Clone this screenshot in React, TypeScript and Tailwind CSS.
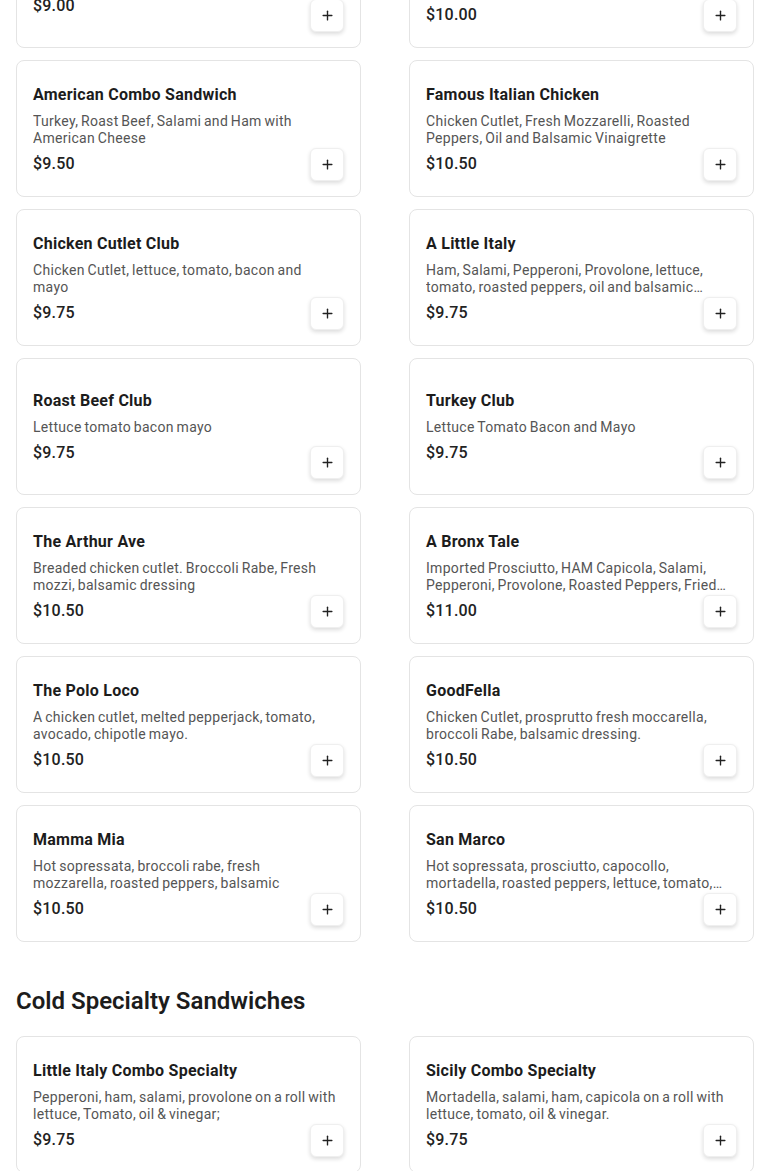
import React from 'react';
import { Plus } from 'lucide-react';

type Item = { name: string; desc: string; price: string };

const hotItems: Item[] = [
  { name: 'Italian Combo Sandwich', desc: 'Ham, Salami and Provolone', price: '$9.00' },
  { name: 'Chicken Parm Hero', desc: 'Breaded chicken cutlet, marinara sauce, melted mozzarella and grated parmesan', price: '$10.00' },
  { name: 'American Combo Sandwich', desc: 'Turkey, Roast Beef, Salami and Ham with American Cheese', price: '$9.50' },
  { name: 'Famous Italian Chicken', desc: 'Chicken Cutlet, Fresh Mozzarelli, Roasted Peppers, Oil and Balsamic Vinaigrette', price: '$10.50' },
  { name: 'Chicken Cutlet Club', desc: 'Chicken Cutlet, lettuce, tomato, bacon and mayo', price: '$9.75' },
  { name: 'A Little Italy', desc: 'Ham, Salami, Pepperoni, Provolone, lettuce, tomato, roasted peppers, oil and balsamic vinaigrette', price: '$9.75' },
  { name: 'Roast Beef Club', desc: 'Lettuce tomato bacon mayo', price: '$9.75' },
  { name: 'Turkey Club', desc: 'Lettuce Tomato Bacon and Mayo', price: '$9.75' },
  { name: 'The Arthur Ave', desc: 'Breaded chicken cutlet. Broccoli Rabe, Fresh mozzi, balsamic dressing', price: '$10.50' },
  { name: 'A Bronx Tale', desc: 'Imported Prosciutto, HAM Capicola, Salami, Pepperoni, Provolone, Roasted Peppers, Fried Eggplant, Oil and Vinegar', price: '$11.00' },
  { name: 'The Polo Loco', desc: 'A chicken cutlet, melted pepperjack, tomato, avocado, chipotle mayo.', price: '$10.50' },
  { name: 'GoodFella', desc: 'Chicken Cutlet, prosprutto fresh moccarella, broccoli Rabe, balsamic dressing.', price: '$10.50' },
  { name: 'Mamma Mia', desc: 'Hot sopressata, broccoli rabe, fresh mozzarella, roasted peppers, balsamic', price: '$10.50' },
  { name: 'San Marco', desc: 'Hot sopressata, prosciutto, capocollo, mortadella, roasted peppers, lettuce, tomato, oil and vinegar', price: '$10.50' },
];

const coldItems: Item[] = [
  { name: 'Little Italy Combo Specialty', desc: 'Pepperoni, ham, salami, provolone on a roll with lettuce, Tomato, oil & vinegar;', price: '$9.75' },
  { name: 'Sicily Combo Specialty', desc: 'Mortadella, salami, ham, capicola on a roll with lettuce, tomato, oil & vinegar.', price: '$9.75' },
];

const MenuCard = ({ item }: { item: Item }) => (
  <div className="grid h-[137px] rounded-lg border border-[#e4e4e4] bg-white px-4 pt-4 pb-[15px]">
    <div className="col-start-1 row-start-1 self-center pr-[8px]">
      <h3 className="text-base leading-6 font-bold text-[#1c1c1c] tracking-[0.25px]">{item.name}</h3>
      <p className="mt-[6px] text-sm leading-[17px] text-[#555] tracking-[0.3px] [word-spacing:-1px] line-clamp-2">{item.desc}</p>
      <div className="mt-[5px] text-base leading-6 font-medium text-[#222] tracking-[0.2px]">{item.price}</div>
    </div>
    <button className="col-start-1 row-start-1 self-end justify-self-end flex h-[33px] w-[34px] items-center justify-center rounded-md border border-[#efefef] bg-white text-[#222] shadow-[0_2px_4px_rgba(0,0,0,0.14)]">
      <Plus size={15} strokeWidth={2.2} />
    </button>
  </div>
);

const App = () => {
  return (
    <div className="min-h-screen bg-white px-4 font-['Roboto',sans-serif] overflow-hidden">
      <div className="mt-[-89px] grid grid-cols-2 gap-x-12 gap-y-3">
        {hotItems.map((item) => (
          <MenuCard key={item.name} item={item} />
        ))}
      </div>

      <h2 className="mt-[43px] mb-[19px] text-2xl leading-8 font-semibold text-[#1c1c1c]">Cold Specialty Sandwiches</h2>
      <div className="grid grid-cols-2 gap-x-12 gap-y-3">
        {coldItems.map((item) => (
          <MenuCard key={item.name} item={item} />
        ))}
      </div>
    </div>
  );
};

export default App;
